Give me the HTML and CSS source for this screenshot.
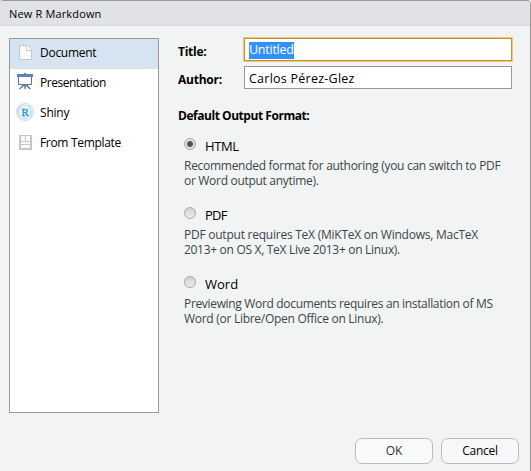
FILE: index.html
```html
<!DOCTYPE html>
<html lang="en">
<head>
<meta charset="utf-8">
<title>New R Markdown</title>
<link rel="stylesheet" href="styles.css">
</head>
<body>
<div class="dialog">
  <header class="caption"><span class="t-caption">New R Markdown</span></header>
  <main class="content">
    <nav class="templates">
      <div class="item selected">
        <svg class="icon" width="18" height="18" viewBox="0 0 18 18"><path d="M3.5 2.5h8l4 4v10h-12z" fill="#fbfbfa" stroke="#c3c8cb"/><path d="M10.5 2.5v5h5" fill="#fff" stroke="#c3c8cb"/></svg>
        <span class="t-document">Document</span>
      </div>
      <div class="item">
        <svg class="icon" width="18" height="18" viewBox="0 0 18 18"><path d="M2.500 2.500h13v9h-13z" fill="#fff" stroke="#58799f"/><path d="M1 1h16v3H1z" fill="#5c83b3"/><path d="M8 0h2v1H8zM6 11h6v2H6z" fill="#68839f"/><path d="M9 12v4M8 12l-4.500 4M10 12l4.500 4" fill="none" stroke="#58799f" stroke-width="1.500"/></svg>
        <span class="t-presentation">Presentation</span>
      </div>
      <div class="item">
        <svg class="icon" width="18" height="18" viewBox="0 0 18 18"><circle cx="9" cy="9" r="8.500" fill="#edf5fa" stroke="#b9d3e7" stroke-width=".8"/><path d="M2 5l5-3 6 1 3 5-2 6-6 2-5-3-2-5zM2 5l1 8M7 2l-6 6M13 3l3 11M16 8l-8 8" fill="none" stroke="#bdd7e9" stroke-width=".7"/><circle cx="9" cy="9" r="4.700" fill="#e8f3fa"/><text class="shiny-r" x="9.200" y="12.500" text-anchor="middle">R</text></svg>
        <span class="t-shiny">Shiny</span>
      </div>
      <div class="item">
        <svg class="icon" width="18" height="18" viewBox="0 0 18 18"><path d="M3 2h13v15H3z" fill="#c3c7cb"/><path d="M5 3h4v5H5zM10 3h4v5h-4zM5 9h9v2H5zM5 12h9v3H5z" fill="#fafafa"/></svg>
        <span class="t-template">From Template</span>
      </div>
    </nav>
    <section class="form">
      <div class="field"><label class="t-title">Title:</label><div class="input focused"><span class="selection">Untitled</span></div></div>
      <div class="field"><label class="t-author">Author:</label><div class="input"><span class="t-name">Carlos Pérez-Glez</span></div></div>
      <h2 class="heading">Default Output Format:</h2>
      <div class="option">
        <div class="choice"><i class="radio checked"></i><span class="t-html">HTML</span></div>
        <p><span class="t-html1">Recommended format for authoring (you can switch to PDF</span><span class="t-html2">or Word output anytime).</span></p>
      </div>
      <div class="option">
        <div class="choice"><i class="radio"></i><span class="t-pdf">PDF</span></div>
        <p><span class="t-pdf1">PDF output requires TeX (MiKTeX on Windows, MacTeX</span><span class="t-pdf2">2013+ on OS X, TeX Live 2013+ on Linux).</span></p>
      </div>
      <div class="option">
        <div class="choice"><i class="radio"></i><span class="t-word">Word</span></div>
        <p><span class="t-word1">Previewing Word documents requires an installation of MS</span><span class="t-word2">Word (or Libre/Open Office on Linux).</span></p>
      </div>
    </section>
  </main>
  <footer class="actions"><div class="button ok">OK</div><div class="button"><span class="t-cancel">Cancel</span></div></footer>
</div>
</body>
</html>
```
FILE: styles.css
```css
* { box-sizing: border-box; }
body { margin: 0; background: #fff; font: 12px/15px "Open Sans", "Noto Sans", sans-serif; color: #000; }
.dialog { width: 531px; height: 471px; border-top: 1px solid #999; border-right: 1px solid #999; border-radius: 3px 4px 0 0; background: #f2f4f4; display: flex; flex-direction: column; overflow: hidden; }
.caption { height: 25px; flex: none; background: #e1e2e5; border-bottom: 1px solid #d6dade; padding: 5px 9px 0; font-size: 11px; }
.content { display: flex; padding: 12px 0 0 9px; height: 387px; flex: none; }
.templates { width: 150px; height: 375px; border: 1px solid #999; background: #fff; }
.item { height: 30px; display: flex; align-items: center; padding-left: 6px; gap: 6px; }
.item span { white-space: nowrap; margin-top: -3px; }
.selected { background: #d6e4f1; }
.icon { flex: none; margin-top: -4px; }
.shiny-r { font: 11px "Liberation Serif", serif; fill: #2c93ca; stroke: #2c93ca; stroke-width: .3px; }
.form { margin-left: 19px; width: 334px; }
.field { display: flex; align-items: center; height: 23px; margin-bottom: 5px; }
.field label { width: 66px; font-weight: 700; padding-top: 4px; white-space: nowrap; }
.input { width: 268px; height: 23px; border: 1px solid #999; background: #fff; padding: 3px 4px; white-space: nowrap; font-size: 12.500px; }
.focused { border-color: #c69035; box-shadow: 0 0 0 1px #edc984; }
.selection { display: inline-block; background: #3390ff; color: #fff; height: 17px; line-height: 16px; letter-spacing: -.25px; }
.t-name { display: inline-block; line-height: 17px; }
.heading { font-size: 12px; line-height: 16px; margin: 19px 0 14px; white-space: nowrap; letter-spacing: -.46px; }
.option { height: 69px; padding-left: 6px; }
.choice { display: flex; height: 20px; font-size: 13px; line-height: 16px; }
.choice span { margin: 0 0 0 9px; }
.radio { width: 12px; height: 12px; border: 1px solid #a8a8a8; border-radius: 50%; background: linear-gradient(#d2d2d2, #ececec); }
.checked { background: radial-gradient(circle, #555 0 2.500px, #e2e2e2 3.500px); }
.option p { margin: 0; color: #3b444c; white-space: nowrap; }
.option p span { display: block; height: 15px; line-height: 15px; }
.actions { display: flex; justify-content: flex-end; gap: 8px; padding: 25px 11px 0 0; }
.button { width: 78px; height: 26px; border: 1px solid #bbb; border-radius: 7px; background: #f7f7fa; text-align: center; line-height: 24px; }
.ok { color: #333; background: #f9fafa; }
.t-caption { letter-spacing: .15px; }
.t-document { letter-spacing: -.27px; }
.t-presentation { letter-spacing: -.47px; }
.t-shiny { letter-spacing: -.2px; }
.t-template { letter-spacing: -.32px; }
.t-title, .t-author { letter-spacing: -.25px; }
.t-name { letter-spacing: .25px; }
.t-html { letter-spacing: -.4px; }
.t-pdf { letter-spacing: -.8px; }
.t-html1 { letter-spacing: -.28px; }
.t-html2 { letter-spacing: -.3px; }
.t-pdf1 { letter-spacing: -.24px; }
.t-pdf2 { letter-spacing: -.3px; }
.t-word1 { letter-spacing: -.33px; }
.t-word2 { letter-spacing: -.28px; }
.t-cancel { letter-spacing: -.3px; }
```
